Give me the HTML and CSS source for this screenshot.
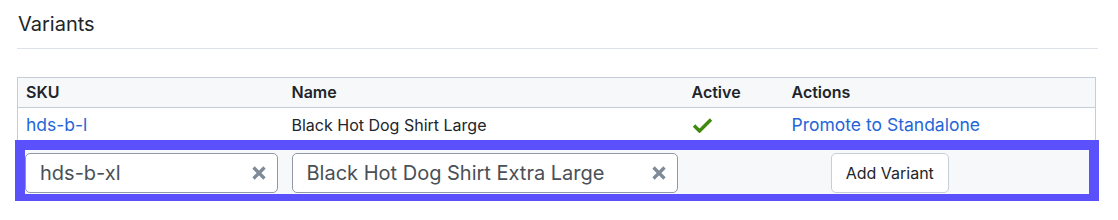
FILE: index.html
```html
<!DOCTYPE html>
<html>
<head>
  <title>Variants</title>
  <meta name="viewport" content="width=device-width, initial-scale=1.0">
  <link rel="stylesheet" href="styles.css">
</head>
<body>
  <div class="panel">
    <h2 class="panel-title">Variants</h2>

    <table class="variants">
      <colgroup>
        <col class="col-sku">
        <col class="col-name">
        <col class="col-active">
        <col>
      </colgroup>
      <thead>
        <tr>
          <th>SKU</th>
          <th>Name</th>
          <th>Active</th>
          <th>Actions</th>
        </tr>
      </thead>
      <tbody>
        <tr>
          <td><a href="#">hds-b-l</a></td>
          <td>Black Hot Dog Shirt Large</td>
          <td>
            <svg class="check" width="21" height="16" viewBox="0 0 21 16">
              <path d="M2 8.5 L7.5 14 L19 2.5" fill="none" stroke="#3f8a0c" stroke-width="3.4"/>
            </svg>
          </td>
          <td><a href="#">Promote to Standalone</a></td>
        </tr>
      </tbody>
      <tfoot>
        <tr class="new-row">
          <td class="cell-sku">
            <div class="field">
              <input type="text" value="hds-b-xl">
              <button class="clear" type="button">
                <svg width="16" height="16" viewBox="0 0 16 16">
                  <path d="M2.5 2.5 L13.5 13.5 M13.5 2.5 L2.5 13.5" stroke="#7e8a96" stroke-width="3.2"/>
                </svg>
              </button>
            </div>
          </td>
          <td class="cell-name">
            <div class="field">
              <input type="text" value="Black Hot Dog Shirt Extra Large">
              <button class="clear" type="button">
                <svg width="16" height="16" viewBox="0 0 16 16">
                  <path d="M2.5 2.5 L13.5 13.5 M13.5 2.5 L2.5 13.5" stroke="#7e8a96" stroke-width="3.2"/>
                </svg>
              </button>
            </div>
          </td>
          <td colspan="2" class="cell-add">
            <button class="add-btn" type="button">Add Variant</button>
          </td>
        </tr>
      </tfoot>
    </table>
  </div>
</body>
</html>
```

FILE: styles.css
```css
body {
  margin: 0;
  font-family: Inter, Roboto, "Liberation Sans", Arial, sans-serif;
  color: #212529;
  background: #ffffff;
}

.panel {
  padding: 0 20px 0 17px;
}

.panel-title {
  margin: 0;
  padding: 12px 0 12px 1px;
  font-size: 20px;
  line-height: 24px;
  font-weight: 400;
  border-bottom: 1px solid #dde2e8;
}

.variants {
  width: 1079px;
  margin-top: 28px;
  border-collapse: collapse;
  border: 1px solid #c5cdd8;
  font-size: 16px;
}

.col-sku { width: 266px; }
.col-name { width: 400px; }
.col-active { width: 100px; }

.variants th {
  text-align: left;
  font-weight: 600;
  padding: 5px 8px;
  line-height: 19px;
  background: #f7f8fa;
  border-bottom: 1px solid #c5cdd8;
}

.variants td {
  padding: 7px 8px;
  line-height: 19px;
  border-bottom: 1px solid #c5cdd8;
}

.variants a {
  color: #2466d8;
  font-size: 17.5px;
  text-decoration: none;
}

.check {
  display: block;
}

/* new variant row */
.new-row {
  outline: 10px solid #5b51fc;
  outline-offset: -7px;
}

.variants .new-row td {
  background: #f7f8fa;
  padding: 10px 6px 7px 7px;
  border-bottom: none;
}

.variants .new-row .cell-name {
  padding-left: 8px;
}

.variants .new-row .cell-add {
  text-align: center;
}

.field {
  position: relative;
}

.field input {
  box-sizing: border-box;
  width: 100%;
  height: 40px;
  padding: 0 40px 0 14px;
  border: 1px solid #8f9aa6;
  border-radius: 5px;
  background: #ffffff;
  font-family: inherit;
  font-size: 20px;
  color: #495057;
}

.clear {
  position: absolute;
  top: 12px;
  right: 11px;
  padding: 0;
  border: none;
  background: none;
  line-height: 0;
  cursor: pointer;
}

.add-btn {
  height: 40px;
  padding: 0 14px;
  border: 1px solid #c6ced8;
  border-radius: 5px;
  background: #ffffff;
  font-family: inherit;
  font-size: 16px;
  color: #212529;
  cursor: pointer;
}
```
